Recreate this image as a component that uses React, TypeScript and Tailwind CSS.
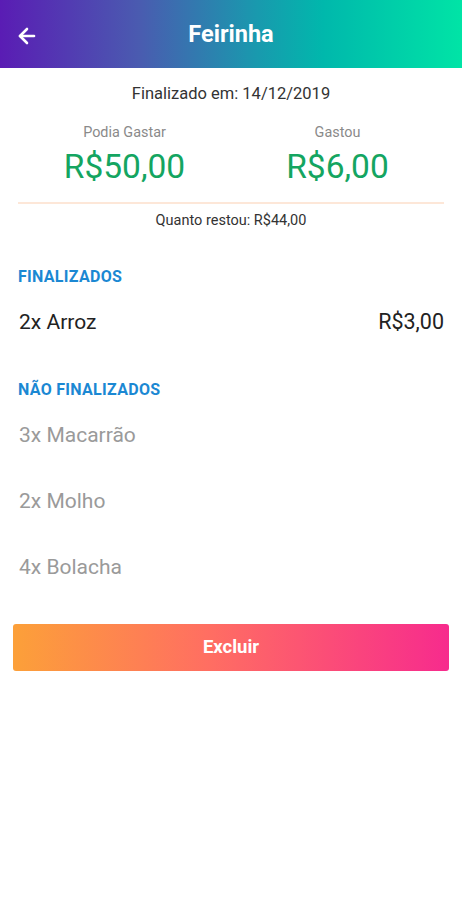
import { ArrowLeft } from "lucide-react";

const finished = [{ label: "2x Arroz", price: "R$3,00" }];
const pending = ["3x Macarrão", "2x Molho", "4x Bolacha"];

export default function App() {
  return (
    <div className="min-h-[900px] w-[462px] bg-white font-['Roboto',sans-serif]">
      <header className="relative flex h-[68px] items-center justify-center bg-[linear-gradient(90deg,#5a1cb4_0%,#4a5bb0_30%,#1a98ae_55%,#00b8ac_70%,#00e4a6_100%)]">
        <button className="absolute left-[15px] top-[24px] text-white">
          <ArrowLeft size={24} strokeWidth={2.6} />
        </button>
        <h1 className="text-[23.5px] font-bold leading-[30px] text-white">Feirinha</h1>
      </header>

      <div className="px-[18px]">
        <p className="mt-[15px] text-center text-[16.5px] leading-[22px] text-[#333]">
          Finalizado em: 14/12/2019
        </p>

        <div className="mt-[19px] grid grid-cols-2">
          <div className="flex flex-col items-center">
            <span className="text-[14.4px] leading-[18px] text-[#8a8a8a]">Podia Gastar</span>
            <span className="mt-[5px] text-[33.5px] leading-[40px] text-[#14a561]">R$50,00</span>
          </div>
          <div className="flex flex-col items-center">
            <span className="text-[14.4px] leading-[18px] text-[#8a8a8a]">Gastou</span>
            <span className="mt-[5px] text-[33.5px] leading-[40px] text-[#14a561]">R$6,00</span>
          </div>
        </div>

        <div className="mt-[15px] h-[2px] bg-[#fde7d8]" />

        <p className="mt-[8px] text-center text-[14.5px] leading-[18px] text-[#333]">
          Quanto restou: R$44,00
        </p>

        <h2 className="mt-[37px] text-[16px] font-bold leading-[20px] tracking-[0.3px] text-[#1b88d3]">
          FINALIZADOS
        </h2>
        <div className="mt-[22px]">
          {finished.map((item) => (
            <div key={item.label} className="flex items-center justify-between leading-[26px]">
              <span className="pl-px text-[21px] text-[#222]">{item.label}</span>
              <span className="text-[21.5px] text-[#222]">{item.price}</span>
            </div>
          ))}
        </div>

        <h2 className="mt-[45px] text-[16px] font-bold leading-[20px] tracking-[0.3px] text-[#1b88d3]">
          NÃO FINALIZADOS
        </h2>
        <div className="mt-[22px]">
          {pending.map((label) => (
            <div key={label} className="flex h-[66px] items-start">
              <span className="pl-px text-[21px] leading-[26px] text-[#9a9a9a]">{label}</span>
            </div>
          ))}
        </div>
      </div>

      <div className="mt-[4px] px-[13px]">
        <button className="h-[47px] w-full rounded-[3px] bg-[linear-gradient(90deg,#fca039_0%,#ff6e62_45%,#f72b8d_100%)] text-[18.5px] font-bold text-white">
          Excluir
        </button>
      </div>
    </div>
  );
}
